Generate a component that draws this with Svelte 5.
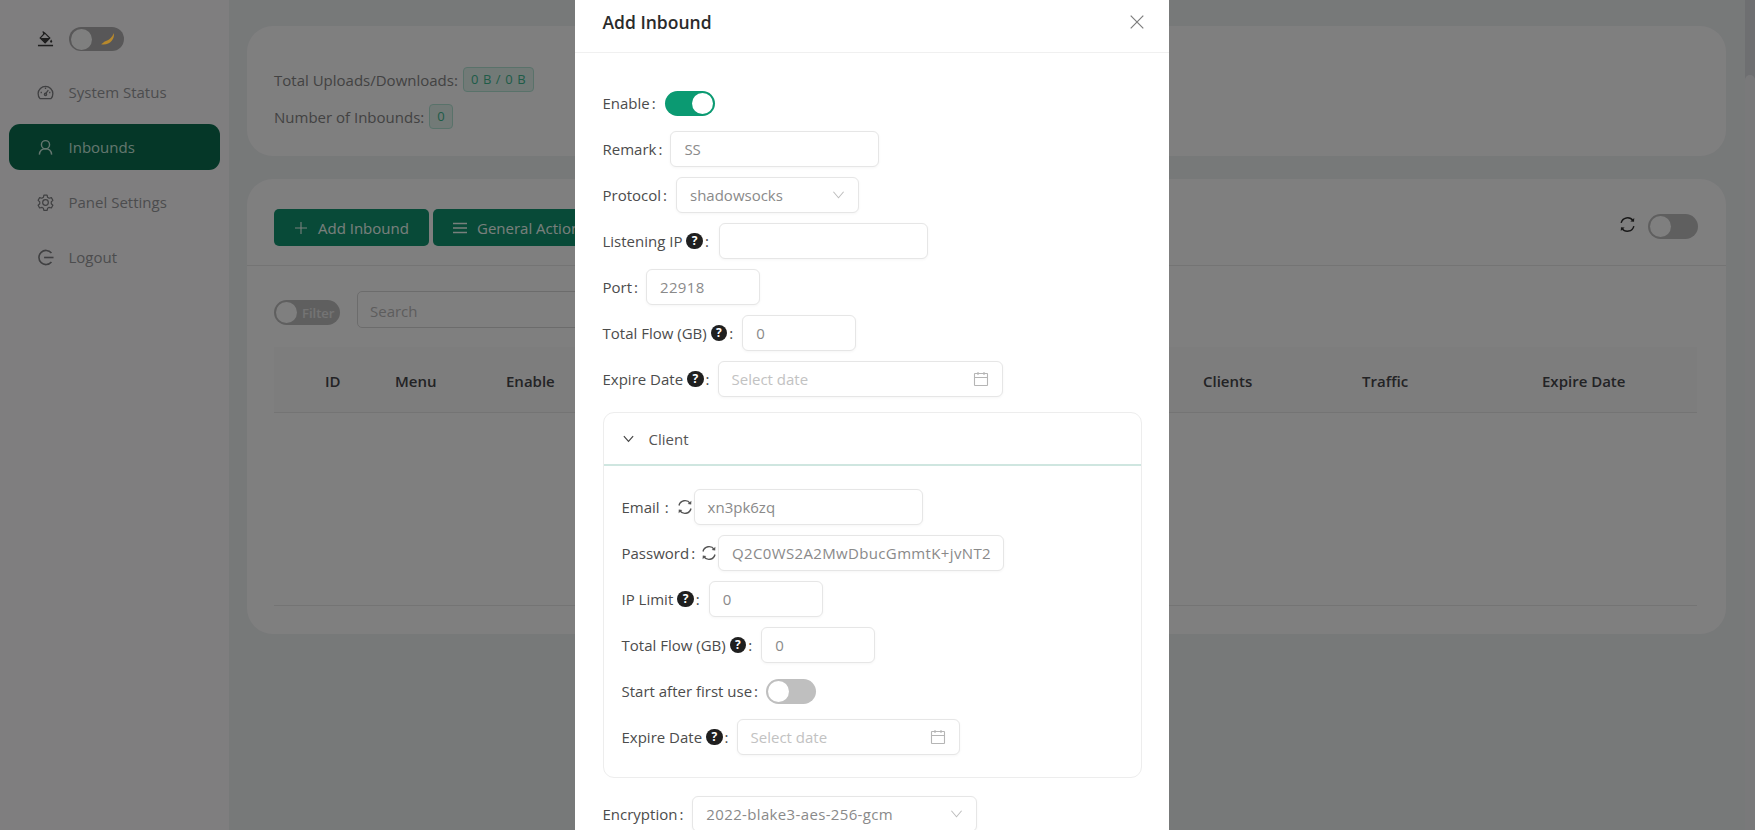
<script>
  const menu = [
    { label: "System Status", icon: "gauge" },
    { label: "Inbounds", icon: "user", active: true },
    { label: "Panel Settings", icon: "gear" },
    { label: "Logout", icon: "logout" }
  ];
  const columns = [
    { label: "ID", width: 70 },
    { label: "Menu", width: 111 },
    { label: "Enable", width: 697 },
    { label: "Clients", width: 159 },
    { label: "Traffic", width: 180 },
    { label: "Expire Date", width: 153 }
  ];
</script>

{#snippet help()}
  <span class="help">?</span>
{/snippet}

{#snippet sync(cls)}
  <svg class={cls} viewBox="0 0 18 18" fill="none" stroke="currentColor" stroke-width="1.4">
    <path d="M3 7.5A6.2 6.2 0 0 1 14.2 5.4" />
    <path d="M15 10.5A6.2 6.2 0 0 1 3.8 12.6" />
    <path d="M15.4 2.8l-.2 3.6-3.5-.3z" fill="currentColor" stroke="none" />
    <path d="M2.6 15.2l.2-3.6 3.5.3z" fill="currentColor" stroke="none" />
  </svg>
{/snippet}

{#snippet calendar()}
  <svg class="suffix" viewBox="0 0 16 16" fill="none" stroke="#b5b5b5" stroke-width="1.1">
    <rect x="1.5" y="2.5" width="13" height="12" rx="0.5" />
    <path d="M1.5 6.5h13M5 1v3M11 1v3" />
  </svg>
{/snippet}

{#snippet chevron()}
  <svg class="suffix chev" viewBox="0 0 14 14" fill="none" stroke="#bdbdbd" stroke-width="1.1">
    <path d="M1.5 4l5.5 6.5L12.5 4" />
  </svg>
{/snippet}

<div class="page">
  <aside class="sidebar">
    <div class="theme">
      <svg class="mi" viewBox="0 0 18 18" fill="#3c3c3c">
        <path d="M6.6 1l1.300.9-.9 1.300 1.600-.6 5 4.900-5 5.200-5.300-5.200L7.500 3 6.600 1.600z" fill="none" stroke="#3c3c3c" stroke-width="1.200" />
        <path d="M3.500 7.500h10.400l-5 5.200z" />
        <path d="M15 9c.7 1 1.200 1.600 1.200 2.200a1.200 1.200 0 0 1-2.400 0c0-.6.500-1.200 1.200-2.200z" />
        <rect x="1" y="14.600" width="16" height="1.600" />
      </svg>
      <span class="switch theme-switch">
        <span class="knob"></span>
        <svg class="moon" viewBox="0 0 14 14"><path d="M13 1c.8 6.500-4.500 12-12 10.500 1.500-.6 2.500-2.400 4-2.800C8 8 11.500 5 13 1z" fill="#b8892c" /></svg>
      </span>
    </div>
    {#each menu as item}
      <div class="item" class:active={item.active}>
        {#if item.icon === "gauge"}
          <svg class="mi" viewBox="0 0 18 18" fill="none" stroke="currentColor" stroke-width="1.4">
            <path d="M3.200 15.500A7.800 7.800 0 1 1 14.800 15.500z" stroke-linejoin="round" />
            <path d="M9 10.500l3-4M3.800 9h1.400M9 3.800v1.400M14.200 9h-1.400" />
            <circle cx="9" cy="11" r="1.200" />
          </svg>
        {:else if item.icon === "user"}
          <svg class="mi" viewBox="0 0 18 18" fill="none" stroke="currentColor" stroke-width="1.5">
            <circle cx="9" cy="6" r="4.300" />
            <path d="M2.500 16.500c.3-3.800 3-6.200 6.500-6.200s6.200 2.400 6.500 6.200" />
          </svg>
        {:else if item.icon === "gear"}
          <svg class="mi" viewBox="0 0 18 18" fill="none" stroke="currentColor" stroke-width="1.300" stroke-linejoin="round">
            <path d="M7.300 1.200h3.400l.5 2.300 1.700 1 2.300-.7 1.600 2.900-1.700 1.600v2l1.700 1.600-1.600 2.900-2.300-.7-1.700 1-.5 2.300H7.300l-.5-2.300-1.700-1-2.300.7-1.600-2.900 1.700-1.600v-2L1.200 6.700l1.600-2.900 2.300.7 1.700-1z" />
            <circle cx="9" cy="9" r="3" />
          </svg>
        {:else}
          <svg class="mi" viewBox="0 0 18 18" fill="none" stroke="currentColor" stroke-width="1.700">
            <path d="M15.300 4.200A7.500 7.500 0 1 0 15.300 13.800" />
            <path d="M7.500 9H17.500" />
          </svg>
        {/if}
        <span>{item.label}</span>
      </div>
    {/each}
  </aside>

  <main class="content">
    <section class="card stats">
      <div class="stat">Total Uploads/Downloads: <span class="tag">0 B / 0 B</span></div>
      <div class="stat">Number of Inbounds: <span class="tag">0</span></div>
    </section>

    <section class="card inbounds">
      <div class="toolbar">
        <button class="btn add">
          <svg class="bi" viewBox="0 0 14 14" stroke="currentColor" stroke-width="1.100"><path d="M7 1v12M1 7h12" /></svg>
          Add Inbound
        </button>
        <button class="btn general">
          <svg class="bi" viewBox="0 0 14 14" stroke="currentColor" stroke-width="1.300"><path d="M0 2.500h14M0 7h14M0 11.500h14" /></svg>
          General Actions
        </button>
        <div class="tools">
          {@render sync("refresh")}
          <span class="switch"><span class="knob"></span></span>
        </div>
      </div>
      <div class="body">
        <div class="filters">
          <span class="switch filter"><span class="knob"></span><span class="filter-text">Filter</span></span>
          <div class="search">Search</div>
        </div>
        <div class="thead">
          {#each columns as col}
            <span style="width: {col.width}px">{col.label}</span>
          {/each}
        </div>
        <div class="tbody"></div>
      </div>
    </section>
  </main>

  <div class="scrollbar"><div class="thumb"></div></div>

  <div class="overlay"></div>

  <div class="modal">
    <header class="modal-head">
      <span class="title">Add Inbound</span>
      <svg class="close" viewBox="0 0 14 14" stroke="#7d7d7d" stroke-width="1.200"><path d="M.7.7l12.600 12.600M13.300.7L.7 13.300" /></svg>
    </header>
    <div class="modal-body">
      <div class="row first"><label>Enable</label><b class="colon">:</b><span class="switch on"><span class="knob"></span></span></div>
      <div class="row"><label>Remark</label><b class="colon tight">:</b><div class="input w209">SS</div></div>
      <div class="row"><label>Protocol</label><b class="colon">:</b><div class="input w183 sel">shadowsocks{@render chevron()}</div></div>
      <div class="row"><label>Listening IP</label>{@render help()}<b class="colon loose">:</b><div class="input w209"></div></div>
      <div class="row"><label>Port</label><b class="colon tight">:</b><div class="input w114 spaced">22918</div></div>
      <div class="row"><label>Total Flow (GB)</label>{@render help()}<b class="colon">:</b><div class="input w114">0</div></div>
      <div class="row"><label>Expire Date</label>{@render help()}<b class="colon tight">:</b><div class="input w285 ph">Select date{@render calendar()}</div></div>

      <div class="client">
        <div class="client-head">
          <svg class="caret" viewBox="0 0 14 14" fill="none" stroke="#444" stroke-width="1.300"><path d="M2 4.500l5 5.500 5-5.500" /></svg>
          Client
        </div>
        <div class="client-body">
          <div class="row"><label>Email</label><b class="colon wide">:</b>{@render sync("gen")}<div class="input w229">xn3pk6zq</div></div>
          <div class="row"><label>Password</label><b class="colon pass">:</b>{@render sync("gen")}<div class="input w286 spaced">Q2C0WS2A2MwDbucGmmtK+jvNT2</div></div>
          <div class="row"><label>IP Limit</label>{@render help()}<b class="colon">:</b><div class="input w114">0</div></div>
          <div class="row"><label>Total Flow (GB)</label>{@render help()}<b class="colon">:</b><div class="input w114">0</div></div>
          <div class="row"><label>Start after first use</label><b class="colon tight">:</b><span class="switch"><span class="knob"></span></span></div>
          <div class="row"><label>Expire Date</label>{@render help()}<b class="colon tight">:</b><div class="input w223 ph">Select date{@render calendar()}</div></div>
        </div>
      </div>

      <div class="row"><label>Encryption</label><b class="colon">:</b><div class="input w285 sel spaced">2022-blake3-aes-256-gcm{@render chevron()}</div></div>
    </div>
  </div>
</div>

<style>
  :global(body) {
    margin: 0;
    overflow: hidden;
  }

  .page {
    position: relative;
    display: flex;
    height: 830px;
    overflow: hidden;
    font-family: "Open Sans", "Noto Sans", sans-serif;
    font-size: 15px;
    color: #333;
    background: #eff2f3;
  }

  /* sidebar */
  .sidebar {
    width: 229px;
    flex: none;
    box-sizing: border-box;
    padding: 27px 9px 0;
    background: #fffdff;
  }

  .theme {
    display: flex;
    align-items: center;
    height: 24px;
    padding-left: 28px;
    gap: 14.500px;
    margin-bottom: 18px;
  }

  .mi {
    width: 17px;
    height: 17px;
    flex: none;
  }

  .item {
    display: flex;
    align-items: center;
    gap: 14.500px;
    height: 46px;
    margin-bottom: 9px;
    padding-left: 28px;
    border-radius: 11px;
    color: #98999c;
  }

  .item .mi {
    color: #808184;
  }

  .item.active {
    background: #0a6e50;
    color: #c9ecdf;
  }

  .item.active .mi {
    color: #c9ecdf;
  }

  /* switches */
  .switch {
    position: relative;
    display: inline-block;
    flex: none;
    width: 50px;
    height: 25px;
    border-radius: 13px;
    background: #bfbfbf;
  }

  .knob {
    position: absolute;
    top: 2px;
    left: 2px;
    width: 21px;
    height: 21px;
    border-radius: 50%;
    background: #fff;
  }

  .switch.on {
    background: #0b9a72;
  }

  .switch.on .knob {
    left: 27px;
  }

  .theme-switch {
    width: 55px;
    height: 24px;
    background: #b0afb0;
  }

  /* keeps its colour above the mask */
  .moon {
    position: absolute;
    z-index: 2;
    top: 5px;
    left: 31px;
    width: 15px;
    height: 15px;
  }

  /* page body */
  .content {
    flex: 1;
    min-width: 0;
    padding: 26px 19px 0 18px;
  }

  .card {
    background: #fffeff;
    border-radius: 26px;
  }

  .stats {
    box-sizing: border-box;
    height: 130px;
    padding: 41px 27px 0;
    margin-bottom: 23px;
  }

  .stat {
    display: flex;
    align-items: center;
    gap: 5px;
    height: 25px;
    margin-bottom: 12px;
    color: #858585;
  }

  .tag {
    display: inline-block;
    box-sizing: border-box;
    height: 25px;
    line-height: 23px;
    padding: 0 7px;
    font-size: 13px;
    letter-spacing: 0.6px;
    color: #3fb891;
    background: #e4f5ef;
    border: 1px solid #b3e5d5;
    border-radius: 4px;
  }

  .inbounds {
    height: 455px;
    overflow: hidden;
  }

  .toolbar {
    display: flex;
    align-items: center;
    gap: 4px;
    box-sizing: border-box;
    height: 87px;
    padding: 11px 28px 0 27px;
    border-bottom: 1px solid #e8e8e8;
  }

  .btn {
    display: flex;
    align-items: center;
    gap: 10px;
    height: 37px;
    padding: 0 0 0 20px;
    border: 0;
    border-radius: 5px;
    font: inherit;
    color: #f2fff9;
    background: #109470;
    white-space: nowrap;
  }

  .add {
    width: 155px;
  }

  .general {
    width: 200px;
  }

  .bi {
    width: 14px;
    height: 14px;
    flex: none;
  }

  .tools {
    margin: -2px 0 0 auto;
    display: flex;
    align-items: center;
    gap: 11px;
  }

  .refresh {
    width: 19px;
    height: 19px;
    margin-top: -4px;
  }

  .body {
    padding: 25px 29px 0 27px;
  }

  .filters {
    display: flex;
    align-items: center;
    gap: 17px;
    height: 37px;
    margin-bottom: 19px;
  }

  .filter {
    width: 66px;
    margin-top: 6px;
  }

  .filter-text {
    position: absolute;
    top: 4px;
    left: 28px;
    font-size: 13px;
    font-weight: 600;
    color: #e8e8e8;
  }

  .search {
    width: 240px;
    box-sizing: border-box;
    height: 37px;
    line-height: 38px;
    padding-left: 12px;
    border: 1px solid #d9d9d9;
    border-radius: 5px;
    color: #bbb;
    background: #fffeff;
  }

  .thead {
    display: flex;
    align-items: center;
    box-sizing: border-box;
    height: 66px;
    padding: 2px 0 0 51px;
    font-weight: 600;
    color: #46464b;
    background: #fafafa;
    border-bottom: 1px solid #e8e8e8;
  }

  .thead span {
    flex: none;
  }

  .tbody {
    height: 192px;
    border-bottom: 1px solid #e8e8e8;
  }

  /* fake page scrollbar */
  .scrollbar {
    width: 10px;
    flex: none;
    background: #dcdee2;
  }

  .thumb {
    height: 100%;
    margin-top: 75px;
    border-radius: 6px 6px 0 0;
    background: #f3f3f5;
  }

  /* modal */
  .overlay {
    position: absolute;
    inset: 0;
    background: rgba(0, 0, 0, 0.5);
  }

  .modal {
    position: absolute;
    z-index: 3;
    top: 0;
    left: 575px;
    width: 594px;
    height: 830px;
    overflow: hidden;
    background: #fff;
  }

  .modal-head {
    display: flex;
    align-items: center;
    justify-content: space-between;
    box-sizing: border-box;
    height: 53px;
    padding: 0 25px 9px 27.500px;
    border-bottom: 1px solid #f0f0f0;
  }

  .title {
    font-size: 17.500px;
    font-weight: 600;
    color: #2b2b2b;
  }

  .close {
    width: 14px;
    height: 14px;
    margin-top: 1px;
  }

  .modal-body {
    padding: 32px 27.500px 0;
  }

  .row {
    display: flex;
    align-items: center;
    height: 36px;
    margin-bottom: 10px;
    color: #4c4c4c;
    white-space: nowrap;
  }

  .row.first {
    margin-bottom: 10px;
  }

  .colon {
    font-weight: 400;
    margin: 0 9px 0 2px;
  }

  .colon.tight {
    margin-right: 8px;
  }

  .colon.loose {
    margin-right: 10px;
  }

  .colon.wide {
    margin: 0 7px 0 5px;
  }

  .colon.pass {
    margin-right: 5px;
  }

  .help {
    display: inline-block;
    flex: none;
    width: 16.500px;
    height: 16.500px;
    margin-left: 4px;
    border-radius: 50%;
    font-size: 12px;
    font-weight: 700;
    line-height: 16.500px;
    text-align: center;
    color: #fff;
    background: #1f1f1f;
  }

  .input {
    position: relative;
    flex: none;
    box-sizing: border-box;
    height: 36px;
    line-height: 34px;
    padding-left: 13px;
    border: 1px solid #e6e6e6;
    border-radius: 6px;
    color: #8a8a8a;
    background: #fff;
    box-shadow: 0 1px 3px rgba(0, 0, 0, 0.04);
  }

  .spaced {
    letter-spacing: 0.35px;
  }

  .ph {
    color: #c2c2c2;
  }

  .w114 { width: 114px; }
  .w183 { width: 183px; }
  .w209 { width: 209px; }
  .w223 { width: 223px; }
  .w229 { width: 229px; }
  .w285 { width: 285px; }
  .w286 { width: 286px; }

  .suffix {
    position: absolute;
    top: 9px;
    right: 13px;
    width: 16px;
    height: 16px;
  }

  .chev {
    width: 13px;
    height: 13px;
    top: 10px;
    right: 13px;
  }

  .gen {
    flex: none;
    width: 18px;
    height: 18px;
    color: #555;
  }

  .client {
    box-sizing: border-box;
    width: 539px;
    height: 366px;
    margin: 15px 0 18px;
    border: 1px solid #ededed;
    border-radius: 11px;
  }

  .client-head {
    display: flex;
    align-items: center;
    gap: 14px;
    box-sizing: border-box;
    height: 53px;
    padding-left: 18px;
    color: #555;
    border-bottom: 2px solid #cfe6e0;
  }

  .caret {
    width: 13px;
    height: 13px;
  }

  .client-body {
    padding: 23px 18px 0;
  }
</style>
